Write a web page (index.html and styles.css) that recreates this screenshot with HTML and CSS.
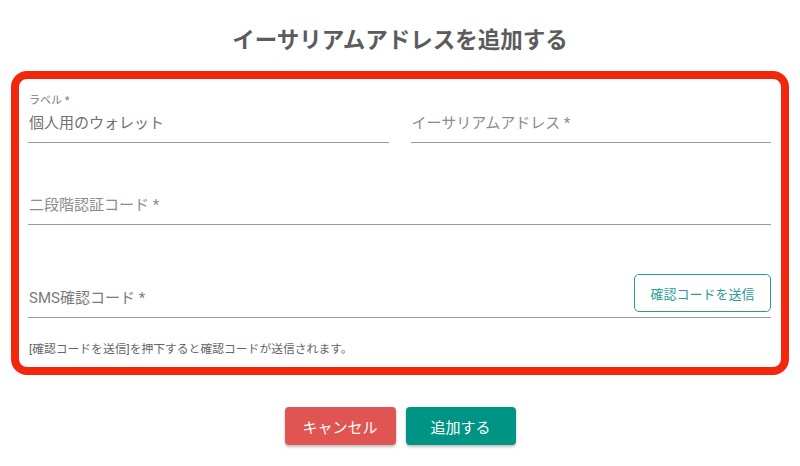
FILE: index.html
```html
<!DOCTYPE html>
<html lang="ja">
<head>
<meta charset="utf-8">
<title>イーサリアムアドレスを追加する</title>
<link rel="stylesheet" href="styles.css">
</head>
<body>
<div class="page">
  <h1 class="title">イーサリアムアドレスを追加する</h1>
  <div class="panel">
    <div class="row two">
      <div class="field">
        <div class="label">ラベル *</div>
        <div class="input value">個人用のウォレット</div>
      </div>
      <div class="field">
        <div class="label"></div>
        <div class="input">イーサリアムアドレス *</div>
      </div>
    </div>
    <div class="row second">
      <div class="field">
        <div class="label"></div>
        <div class="input">二段階認証コード *</div>
      </div>
    </div>
    <div class="row third">
      <div class="sms">
        <div class="sms-text">SMS確認コード *</div>
        <button class="send">確認コードを送信</button>
      </div>
    </div>
    <p class="help">[確認コードを送信]を押下すると確認コードが送信されます。</p>
  </div>
  <div class="actions">
    <button class="btn cancel">キャンセル</button>
    <button class="btn add">追加する</button>
  </div>
</div>
</body>
</html>
```

FILE: styles.css
```css
* { box-sizing: border-box; }
html, body { margin: 0; padding: 0; background: #fff; }
body {
  font-family: Roboto, "Noto Sans CJK JP", sans-serif;
  color: #666;
}
.page { width: 800px; height: 466px; overflow: hidden; }
.title {
  margin: 0;
  padding-top: 25px;
  height: 71px;
  line-height: 30px;
  font-size: 22.5px;
  font-weight: 700;
  color: #5c5c5c;
  text-align: center;
}
.panel {
  margin: 0 11px;
  border: 8px solid #f3270c;
  border-radius: 16px;
  padding: 15px 10px 11px 9px;
}
.row.two { display: flex; gap: 22px; }
.row.two .field { flex: 1; }
.row.second { margin-top: 33px; }
.row.third { margin-top: 48px; }
.label {
  height: 14px;
  line-height: 14px;
  font-size: 11px;
  color: #7a7a7a;
  padding-left: 1px;
}
.input {
  margin-top: 4px;
  line-height: 22px;
  padding-bottom: 8px;
  font-size: 15px;
  color: #8c8c8c;
  border-bottom: 1px solid #9a9a9a;
  padding-left: 1px;
}
.input.value { color: #707070; }
.sms {
  display: flex;
  align-items: flex-end;
  justify-content: space-between;
  border-bottom: 1px solid #9a9a9a;
  height: 45px;
  padding-bottom: 5px;
}
.sms-text {
  font-size: 15px;
  line-height: 22px;
  color: #7a7a7a;
  padding-bottom: 3px;
  padding-left: 1px;
}
.send {
  width: 137px;
  height: 38px;
  border: 1px solid #2a9d94;
  border-radius: 5px;
  background: #fff;
  color: #2a9d94;
  font-family: inherit;
  font-size: 13px;
  padding: 0;
}
.help {
  margin: 24px 0 0;
  line-height: 14px;
  font-size: 11.8px;
  color: #666;
  padding-left: 1px;
}
.actions {
  display: flex;
  justify-content: center;
  gap: 10px;
  margin-top: 32px;
}
.btn {
  height: 38px;
  border: none;
  border-radius: 4px;
  color: #fff;
  font-family: inherit;
  font-size: 15px;
  padding: 0;
  box-shadow: 0 2px 3px rgba(0,0,0,0.25);
}
.cancel { width: 111px; background: #e05552; }
.add { width: 110px; background: #009485; }
```
